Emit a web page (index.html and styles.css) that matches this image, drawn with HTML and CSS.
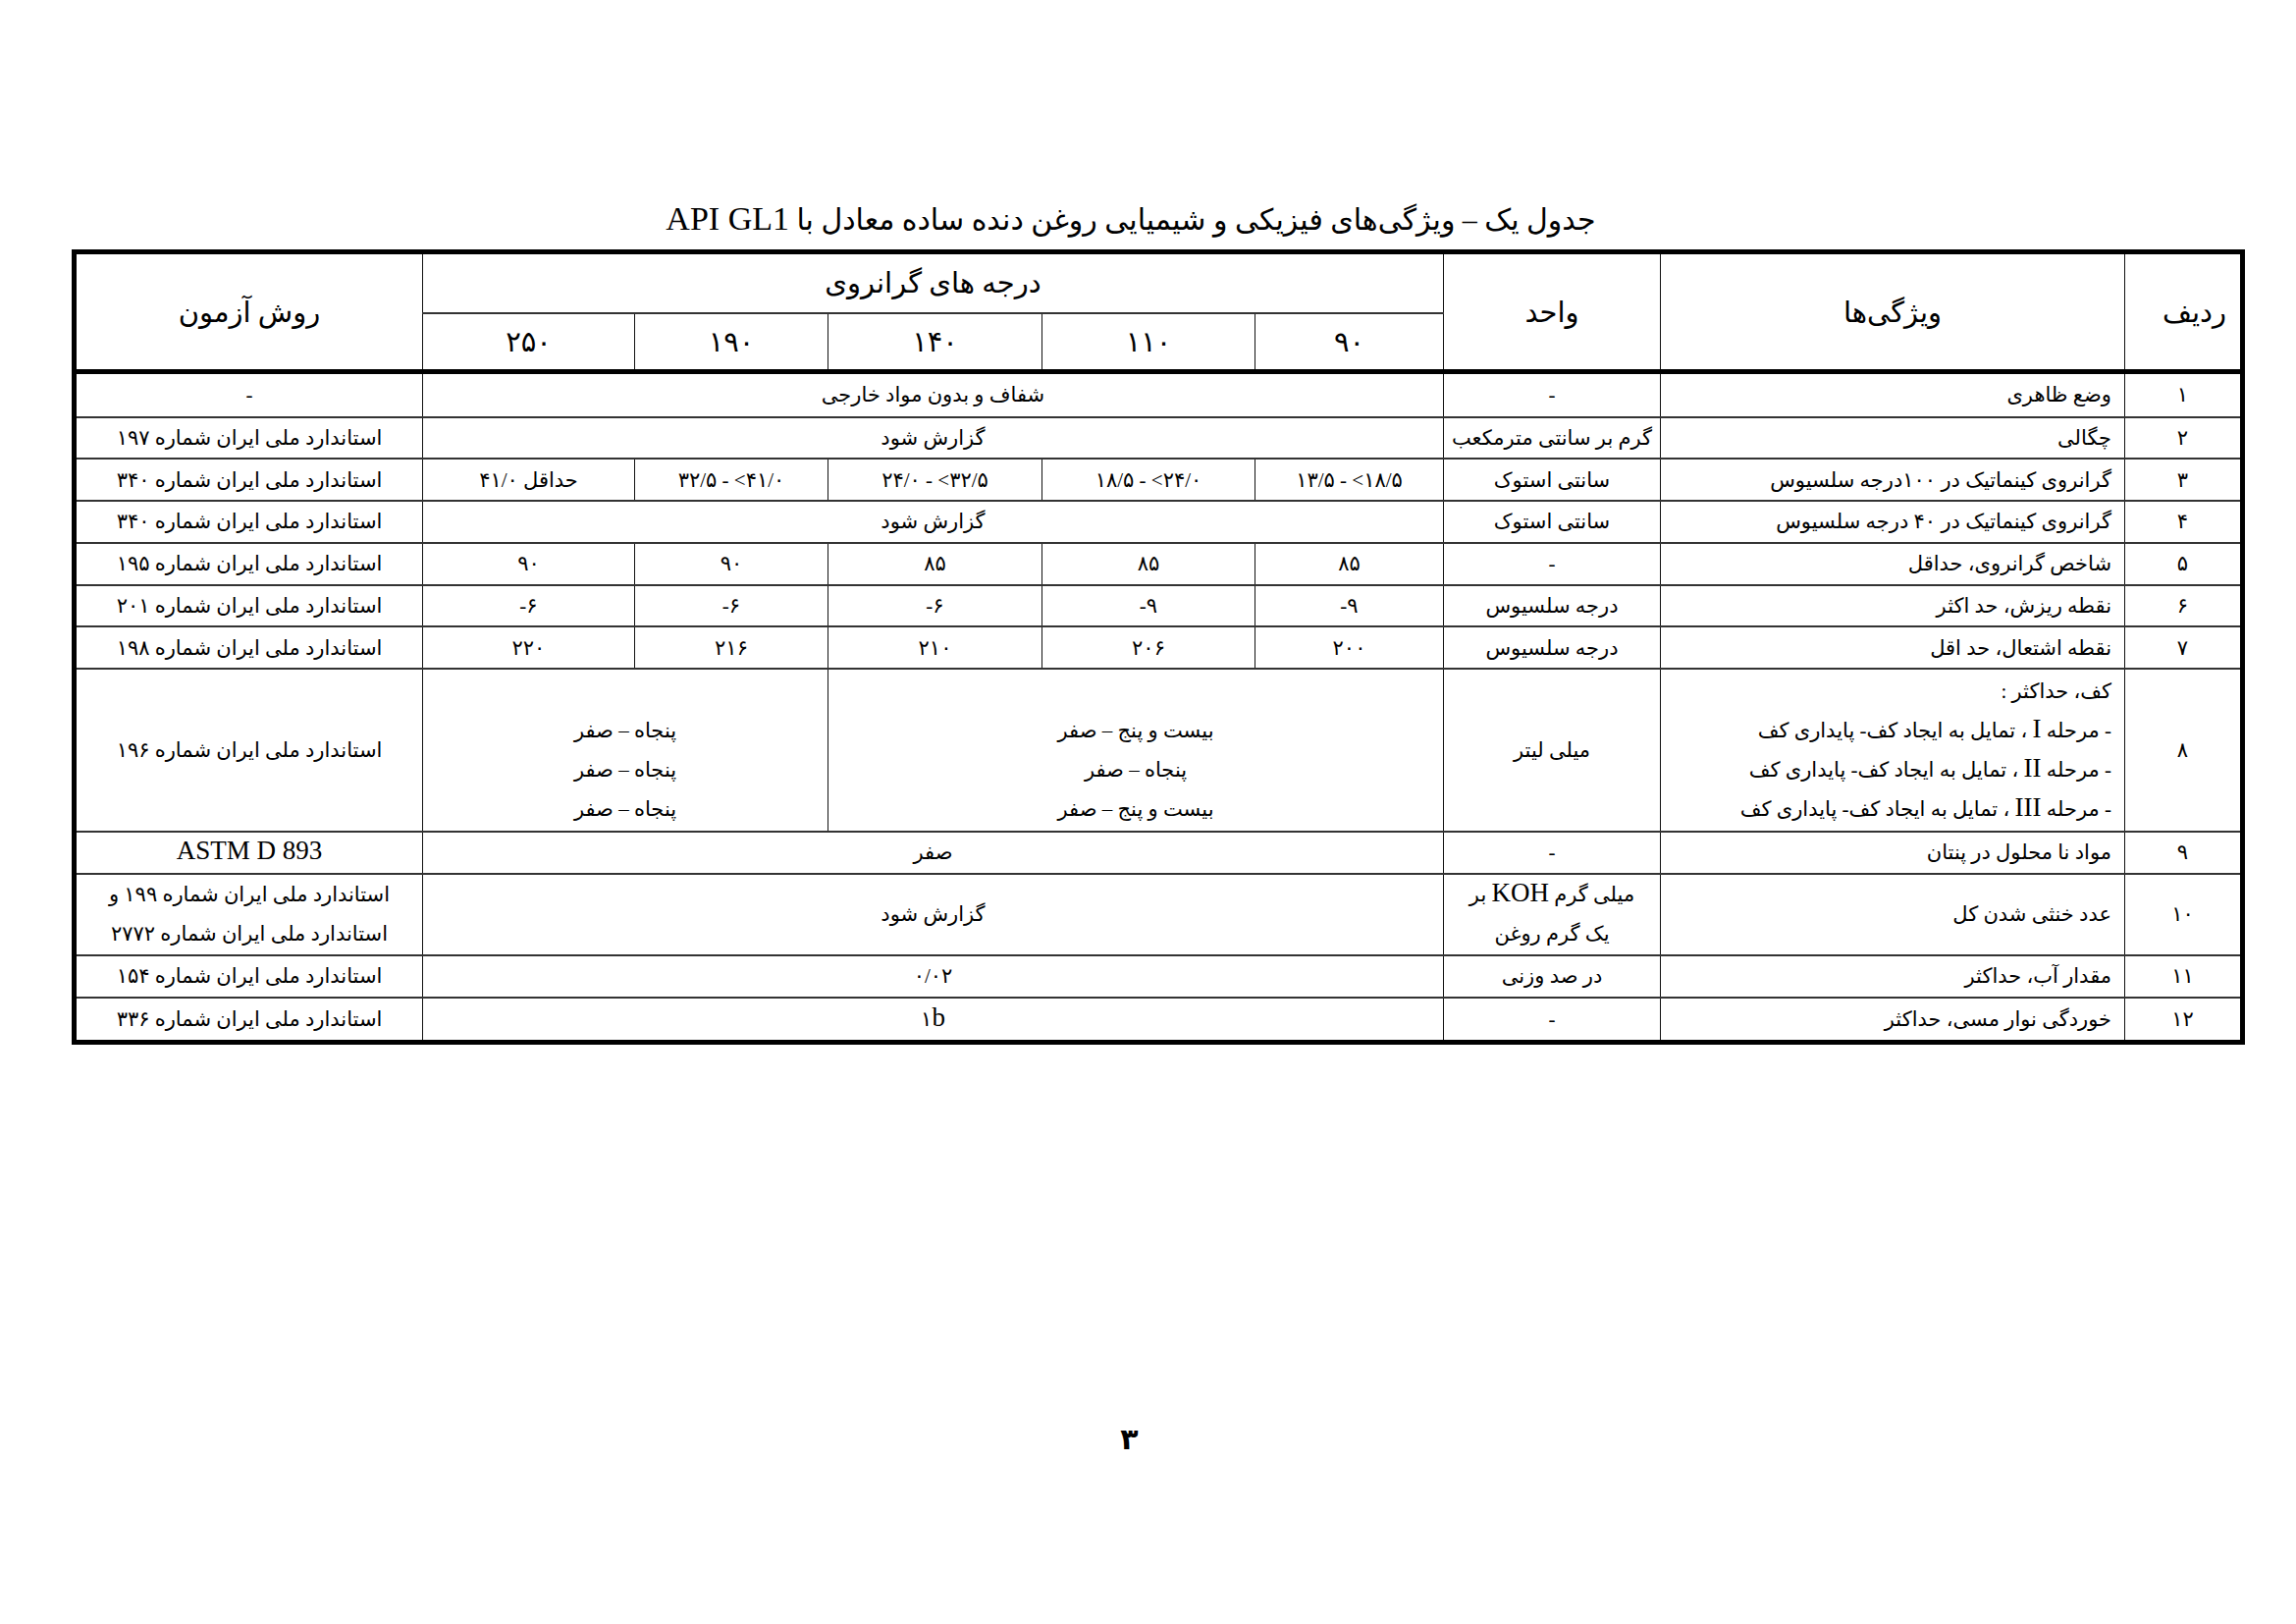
FILE: index.html
```html
<!DOCTYPE html>
<html lang="fa" dir="rtl">
<head>
<meta charset="utf-8">
<title>جدول یک</title>
<link rel="stylesheet" href="styles.css">
</head>
<body>
<div class="page">
  <h1 class="title">جدول یک – ویژگی‌های فیزیکی و شیمیایی روغن دنده ساده معادل با <span class="lat">API GL1</span></h1>
  <table class="spec">
    <colgroup>
      <col class="c-radif">
      <col class="c-prop">
      <col class="c-unit">
      <col class="c-g90">
      <col class="c-g110">
      <col class="c-g140">
      <col class="c-g190">
      <col class="c-g250">
      <col class="c-method">
    </colgroup>
    <thead>
      <tr class="h1">
        <th rowspan="2" class="radif-h">ردیف</th>
        <th rowspan="2">ویژگی‌ها</th>
        <th rowspan="2">واحد</th>
        <th colspan="5">درجه های گرانروی</th>
        <th rowspan="2">روش آزمون</th>
      </tr>
      <tr class="h2">
        <th>۹۰</th>
        <th>۱۱۰</th>
        <th>۱۴۰</th>
        <th>۱۹۰</th>
        <th>۲۵۰</th>
      </tr>
    </thead>
    <tbody>
      <tr class="r first">
        <td>۱</td>
        <td class="prop">وضع ظاهری</td>
        <td>-</td>
        <td colspan="5">شفاف و بدون مواد خارجی</td>
        <td>-</td>
      </tr>
      <tr class="r">
        <td>۲</td>
        <td class="prop">چگالی</td>
        <td>گرم بر سانتی مترمکعب</td>
        <td colspan="5">گزارش شود</td>
        <td>استاندارد ملی ایران شماره ۱۹۷</td>
      </tr>
      <tr class="r">
        <td>۳</td>
        <td class="prop">گرانروی کینماتیک در ۱۰۰درجه سلسیوس</td>
        <td>سانتی استوک</td>
        <td><span class="ltr">۱۳/۵ - &lt;۱۸/۵</span></td>
        <td><span class="ltr">۱۸/۵ - &lt;۲۴/۰</span></td>
        <td><span class="ltr">۲۴/۰ - &lt;۳۲/۵</span></td>
        <td><span class="ltr">۳۲/۵ - &lt;۴۱/۰</span></td>
        <td>حداقل ۴۱/۰</td>
        <td>استاندارد ملی ایران شماره ۳۴۰</td>
      </tr>
      <tr class="r">
        <td>۴</td>
        <td class="prop">گرانروی کینماتیک در ۴۰ درجه سلسیوس</td>
        <td>سانتی استوک</td>
        <td colspan="5">گزارش شود</td>
        <td>استاندارد ملی ایران شماره ۳۴۰</td>
      </tr>
      <tr class="r">
        <td>۵</td>
        <td class="prop">شاخص گرانروی، حداقل</td>
        <td>-</td>
        <td>۸۵</td>
        <td>۸۵</td>
        <td>۸۵</td>
        <td>۹۰</td>
        <td>۹۰</td>
        <td>استاندارد ملی ایران شماره ۱۹۵</td>
      </tr>
      <tr class="r">
        <td>۶</td>
        <td class="prop">نقطه ریزش، حد اکثر</td>
        <td>درجه سلسیوس</td>
        <td><span class="ltr">-۹</span></td>
        <td><span class="ltr">-۹</span></td>
        <td><span class="ltr">-۶</span></td>
        <td><span class="ltr">-۶</span></td>
        <td><span class="ltr">-۶</span></td>
        <td>استاندارد ملی ایران شماره ۲۰۱</td>
      </tr>
      <tr class="r">
        <td>۷</td>
        <td class="prop">نقطه اشتعال، حد اقل</td>
        <td>درجه سلسیوس</td>
        <td>۲۰۰</td>
        <td>۲۰۶</td>
        <td>۲۱۰</td>
        <td>۲۱۶</td>
        <td>۲۲۰</td>
        <td>استاندارد ملی ایران شماره ۱۹۸</td>
      </tr>
      <tr class="r8">
        <td>۸</td>
        <td class="prop">کف، حداکثر :<br>- مرحله <span class="lat">I</span> ، تمایل به ایجاد کف- پایداری کف<br>- مرحله <span class="lat">II</span> ، تمایل به ایجاد کف- پایداری کف<br>- مرحله <span class="lat">III</span> ، تمایل به ایجاد کف- پایداری کف</td>
        <td>میلی لیتر</td>
        <td colspan="3" class="bottom">بیست و پنج – صفر<br>پنجاه – صفر<br>بیست و پنج – صفر</td>
        <td colspan="2" class="bottom">پنجاه – صفر<br>پنجاه – صفر<br>پنجاه – صفر</td>
        <td>استاندارد ملی ایران شماره ۱۹۶</td>
      </tr>
      <tr class="r">
        <td>۹</td>
        <td class="prop">مواد نا محلول در پنتان</td>
        <td>-</td>
        <td colspan="5">صفر</td>
        <td><span class="lat">ASTM D 893</span></td>
      </tr>
      <tr class="r10">
        <td>۱۰</td>
        <td class="prop">عدد خنثی شدن کل</td>
        <td>میلی گرم <span class="lat">KOH</span> بر<br>یک گرم روغن</td>
        <td colspan="5">گزارش شود</td>
        <td>استاندارد ملی ایران شماره ۱۹۹ و<br>استاندارد ملی ایران شماره ۲۷۷۲</td>
      </tr>
      <tr class="r">
        <td>۱۱</td>
        <td class="prop">مقدار آب، حداکثر</td>
        <td>در صد وزنی</td>
        <td colspan="5">۰/۰۲</td>
        <td>استاندارد ملی ایران شماره ۱۵۴</td>
      </tr>
      <tr class="r last">
        <td>۱۲</td>
        <td class="prop">خوردگی نوار مسی، حداکثر</td>
        <td>-</td>
        <td colspan="5">۱<span class="lat">b</span></td>
        <td>استاندارد ملی ایران شماره ۳۳۶</td>
      </tr>
    </tbody>
  </table>
  <div class="pagenum">۳</div>
</div>
</body>
</html>
```
FILE: styles.css
```css
html, body {
  margin: 0;
  padding: 0;
  background: #ffffff;
}

body {
  font-family: "Liberation Serif", "DejaVu Sans", serif;
  color: #000000;
}

.page {
  width: 2339px;
  height: 1654px;
  box-sizing: border-box;
  padding: 200px 52px 0 80px;
}

.title {
  margin: 0 0 6px 0;
  padding: 0 63px 0 0;
  font-size: 30px;
  font-weight: normal;
  line-height: 48px;
  text-align: center;
}

.title .lat {
  font-size: 34px;
  line-height: 1;
}

.spec {
  width: 100%;
  table-layout: fixed;
  border-collapse: collapse;
  border: 5px solid #000;
}

.c-radif { width: 120px; }
.c-prop { width: 473px; }
.c-unit { width: 221px; }
.c-g90 { width: 192px; }
.c-g110 { width: 217px; }
.c-g140 { width: 218px; }
.c-g190 { width: 197px; }
.c-g250 { width: 216px; }
.c-method { width: 355px; }

.spec th,
.spec td {
  border-left: 1px solid #111;
  border-right: 1px solid #111;
  border-top: 2px solid #333;
  border-bottom: 2px solid #333;
  padding: 0 6px;
  text-align: center;
  vertical-align: middle;
  font-weight: normal;
  white-space: nowrap;
}

.spec th {
  font-size: 29px;
  line-height: 40px;
}

.spec td {
  font-size: 21px;
  line-height: 40px;
}

.spec thead tr.h2 th {
  border-bottom: 5px solid #000;
}

.spec thead tr.h1 th[rowspan] {
  border-bottom: 5px solid #000;
}

.h1 { height: 62px; }
.h2 { height: 60px; }
.r { height: 42.75px; }
.r.first { height: 46px; }
.r.last { height: 45.5px; }
.r8 { height: 166px; }
.r10 { height: 83px; }

.spec th.radif-h {
  text-align: right;
  padding-right: 14px;
}

.spec td.prop {
  text-align: right;
  padding-right: 13px;
}

.spec td.bottom {
  vertical-align: bottom;
  padding-bottom: 2px;
}

.spec td .lat {
  font-size: 27px;
  line-height: 1;
}

.ltr {
  direction: ltr;
  unicode-bidi: isolate;
  display: inline-block;
}

.pagenum {
  margin-top: 382px;
  padding-right: 66px;
  font-size: 30px;
  font-weight: bold;
  line-height: 40px;
  text-align: center;
}
```
